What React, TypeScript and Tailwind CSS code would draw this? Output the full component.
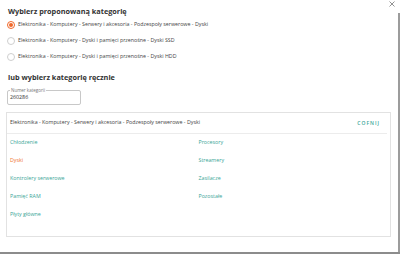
import React from "react";

const options = [
  "Elektronika - Komputery - Serwery i akcesoria - Podzespoły serwerowe - Dyski",
  "Elektronika - Komputery - Dyski i pamięci przenośne - Dyski SSD",
  "Elektronika - Komputery - Dyski i pamięci przenośne - Dyski HDD",
];

const left = [
  { t: "Chłodzenie", o: false },
  { t: "Dyski", o: true },
  { t: "Kontrolery serwerowe", o: false },
  { t: "Pamięć RAM", o: false },
  { t: "Płyty główne", o: false },
];
const right = ["Procesory", "Streamery", "Zasilacze", "Pozostałe"];

export default function App() {
  return (
    <div
      className="w-[400px] h-[254px] flex flex-col bg-white overflow-hidden relative"
      style={{ fontFamily: '"Open Sans", "Liberation Sans", sans-serif' }}
    >
      <svg
        className="absolute left-[389px] top-[1px]"
        width="6"
        height="6"
        viewBox="0 0 6 6"
      >
        <path d="M0.5 0.5 L5.5 5.5 M5.5 0.5 L0.5 5.5" stroke="#777" strokeWidth="0.8" />
      </svg>
      <div className="flex-1 flex">
        <div className="flex-1 pl-[6px] flex flex-col">
          <div className="mt-[5px] h-[12px] leading-[12px] text-[7.3px] font-bold text-[#333] pl-[2px]">
            Wybierz proponowaną kategorię
          </div>
          <div className="flex flex-col">
            {options.map((o, i) => (
              <div key={i} className="h-[16px] flex items-center gap-[3px] pl-[1px]">
                {i === 0 ? (
                  <div className="w-[8px] h-[8px] rounded-full border border-[#f0682a] flex items-center justify-center">
                    <div className="w-[4px] h-[4px] rounded-full bg-[#f0682a]" />
                  </div>
                ) : (
                  <div className="w-[8px] h-[8px] rounded-full border border-[#cfcfcf]" />
                )}
                <span className="text-[5.3px] text-[#444] leading-none">{o}</span>
              </div>
            ))}
          </div>
          <div className="mt-[6px] h-[12px] leading-[12px] text-[7.3px] font-bold text-[#333] pl-[2px]">
            lub wybierz kategorię ręcznie
          </div>
          <div className="mt-[7px] ml-[1px] w-[74px] h-[15px] border border-[#c8c8c8] rounded-[2px] relative flex items-center pl-[2px]">
            <span className="absolute left-[2px] top-[-4px] bg-white px-[1px] text-[4.5px] leading-[6px] text-[#777]">
              Numer kategorii
            </span>
            <span className="text-[5.3px] text-[#333] leading-none mt-[1px]">260286</span>
          </div>
          <div className="mt-[7px] w-[385px] h-[125px] border border-[#e2e2e2] flex flex-col">
            <div className="h-[20px] flex items-center justify-between pl-[3px] pr-[10px]">
              <span className="text-[5.3px] text-[#444] leading-none">
                Elektronika - Komputery - Serwery i akcesoria - Podzespoły serwerowe - Dyski
              </span>
              <span className="text-[5px] font-semibold tracking-[1px] text-[#3aa597] leading-none">
                COFNIJ
              </span>
            </div>
            <div className="h-[1px] bg-[#ececec] mr-[3px]" />
            <div className="grid grid-cols-2 px-[3px]">
              <div className="flex flex-col">
                {left.map((l) => (
                  <div
                    key={l.t}
                    className={`h-[18px] flex items-center text-[5.3px] leading-none ${l.o ? "text-[#f0742f]" : "text-[#3aa597]"}`}
                  >
                    {l.t}
                  </div>
                ))}
              </div>
              <div className="flex flex-col">
                {right.map((r) => (
                  <div key={r} className="h-[18px] flex items-center text-[5.3px] leading-none text-[#3aa597]">
                    {r}
                  </div>
                ))}
              </div>
            </div>
          </div>
        </div>
        <div className="w-[2px] mt-[13px] bg-[#9c9c9c]" />
      </div>
      <div className="h-[2px] bg-[#8c8c8c]" />
    </div>
  );
}
